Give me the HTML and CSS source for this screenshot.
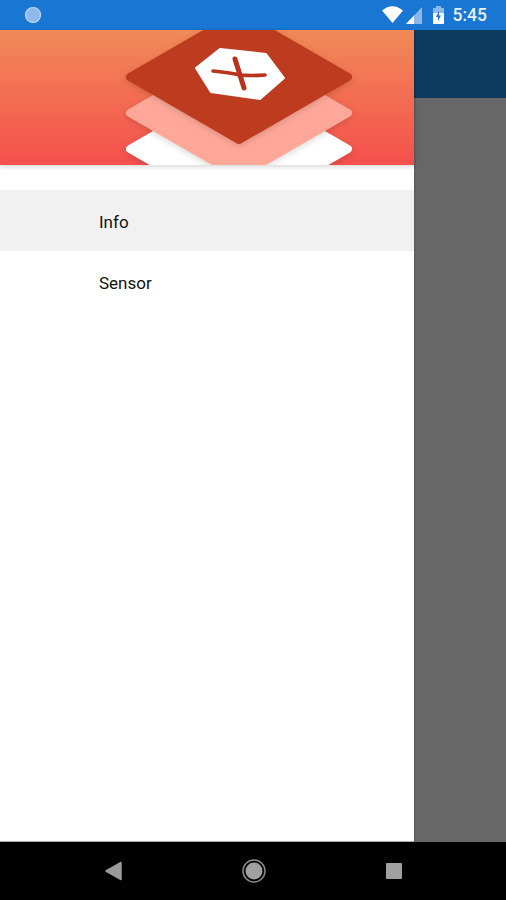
FILE: index.html
```html
<!DOCTYPE html>
<html lang="en">
<head>
    <meta charset="UTF-8">
    <title>Menu</title>
    <link rel="stylesheet" href="styles.css">
</head>
<body>

    <div id="status-bar">
        <svg class="status-dot" width="20" height="20" viewBox="0 0 20 20">
            <circle cx="10" cy="10" r="7.5" fill="#8fb8ec" stroke="#c4daf6" stroke-width="1.2"/>
        </svg>
        <div class="status-right">
            <svg class="status-icons" width="64" height="20" viewBox="0 0 64 20">
                <path d="M1 5.5 Q11.5 -3 22 5.5 L11.5 18 Z" fill="#fff"/>
                <path d="M25 19 L41 2 V19 Z" fill="#8db7ea"/>
                <path d="M25 19 L33 10.5 V19 Z" fill="#fff"/>
                <path d="M55 3 V1 H60 V3 H63 V19 H52 V3 Z" fill="#8db7ea"/>
                <path d="M52 8 H63 V19 H52 Z" fill="#fff"/>
                <path d="M58 6 L55 12 H57 V16 L60 10.5 H58 Z" fill="#1976d2"/>
            </svg>
            <span class="status-time">5:45</span>
        </div>
    </div>

    <div id="main-container">
        <div id="drawer">
            <div id="drawer-header">
                <svg width="414" height="135" viewBox="0 0 414 135">
                    <path class="layer" d="M239 56 L348 119 L239 182 L130 119 Z" fill="#fff" stroke="#fff"/>
                    <path class="layer" d="M239 20 L348 83 L239 146 L130 83 Z" fill="#ffa899" stroke="#ffa899"/>
                    <path class="layer" d="M239 -16 L348 47 L239 110 L130 47 Z" fill="#bd3c20" stroke="#bd3c20"/>
                    <path d="M196 38 L220 19 L266 24 L284 48 L260 69 L211 62 Z" fill="#fff" stroke="#fff" stroke-width="2" stroke-linejoin="round"/>
                    <path class="logo-x" d="M213 41 Q232 43 240 45 Q252 46 265 45" stroke-width="3.5"/>
                    <path class="logo-x" d="M235 29 L244 58" stroke-width="5"/>
                </svg>
            </div>
            <div id="drawer-menu">
                <div class="menu-item selected">Info</div>
                <div class="menu-item">Sensor</div>
            </div>
        </div>
        <div id="scrim">
            <div id="app-bar"></div>
        </div>
    </div>

    <div id="nav-bar">
        <svg width="20" height="22" viewBox="0 0 20 22">
            <path d="M18 2.5 V19.5 L3 11 Z" fill="#9b9b9b" stroke="#9b9b9b" stroke-width="1.5" stroke-linejoin="round"/>
        </svg>
        <svg width="26" height="26" viewBox="0 0 26 26">
            <circle cx="13" cy="13" r="11" fill="none" stroke="#8a8a8a" stroke-width="1.5"/>
            <circle cx="13" cy="13" r="8.5" fill="#a0a0a0"/>
        </svg>
        <svg width="18" height="18" viewBox="0 0 18 18">
            <rect x="1" y="1" width="16" height="16" rx="1" fill="#a0a0a0"/>
        </svg>
    </div>

</body>
</html>
```

FILE: styles.css
```css
html, body {
    margin: 0;
    height: 100%;
}
body {
    display: flex;
    flex-direction: column;
    height: 900px;
    overflow: hidden;
    font-family: Roboto, "Liberation Sans", sans-serif;
}
#status-bar {
    flex: 0 0 30px;
    display: flex;
    align-items: center;
    justify-content: space-between;
    padding: 0 19px 0 23px;
    background-color: #1976d2;
    color: #e6effa;
}
.status-right {
    display: flex;
    align-items: center;
    gap: 8px;
}
.status-icons, .status-dot {
    filter: blur(0.4px);
}
.status-time {
    font-size: 17.5px;
    font-weight: 500;
}
#main-container {
    flex: 1;
    display: flex;
    min-height: 0;
}
#drawer {
    flex: 0 0 414px;
    box-sizing: border-box;
    display: flex;
    flex-direction: column;
    background-color: #fff;
    border-bottom: 1px solid #aaa;
    box-shadow: 1px 0 2px rgba(0, 0, 0, 0.12);
    z-index: 1;
}
#drawer-header {
    flex: 0 0 135px;
    background: linear-gradient(#f18a58, #f5504d);
    box-shadow: 0 2px 4px rgba(0, 0, 0, 0.15);
}
#drawer-header svg {
    display: block;
    filter: blur(0.5px);
}
.layer {
    stroke-width: 8;
    stroke-linejoin: round;
    filter: drop-shadow(0 2px 3px rgba(0, 0, 0, 0.15));
}
.logo-x {
    fill: none;
    stroke: #b8341c;
    stroke-linecap: round;
}
#drawer-menu {
    padding-top: 25px;
}
.menu-item {
    box-sizing: border-box;
    height: 61px;
    padding: 3px 0 0 99px;
    line-height: 58px;
    font-size: 17px;
    color: #111;
}
.selected {
    background-color: #f1f1f1;
}
#scrim {
    flex: 1;
    background-color: #676767;
}
#app-bar {
    height: 68px;
    background-color: #0d3a60;
}
#nav-bar {
    flex: 0 0 58px;
    display: flex;
    align-items: center;
    justify-content: center;
    gap: 118px;
    background-color: #000;
}
```
